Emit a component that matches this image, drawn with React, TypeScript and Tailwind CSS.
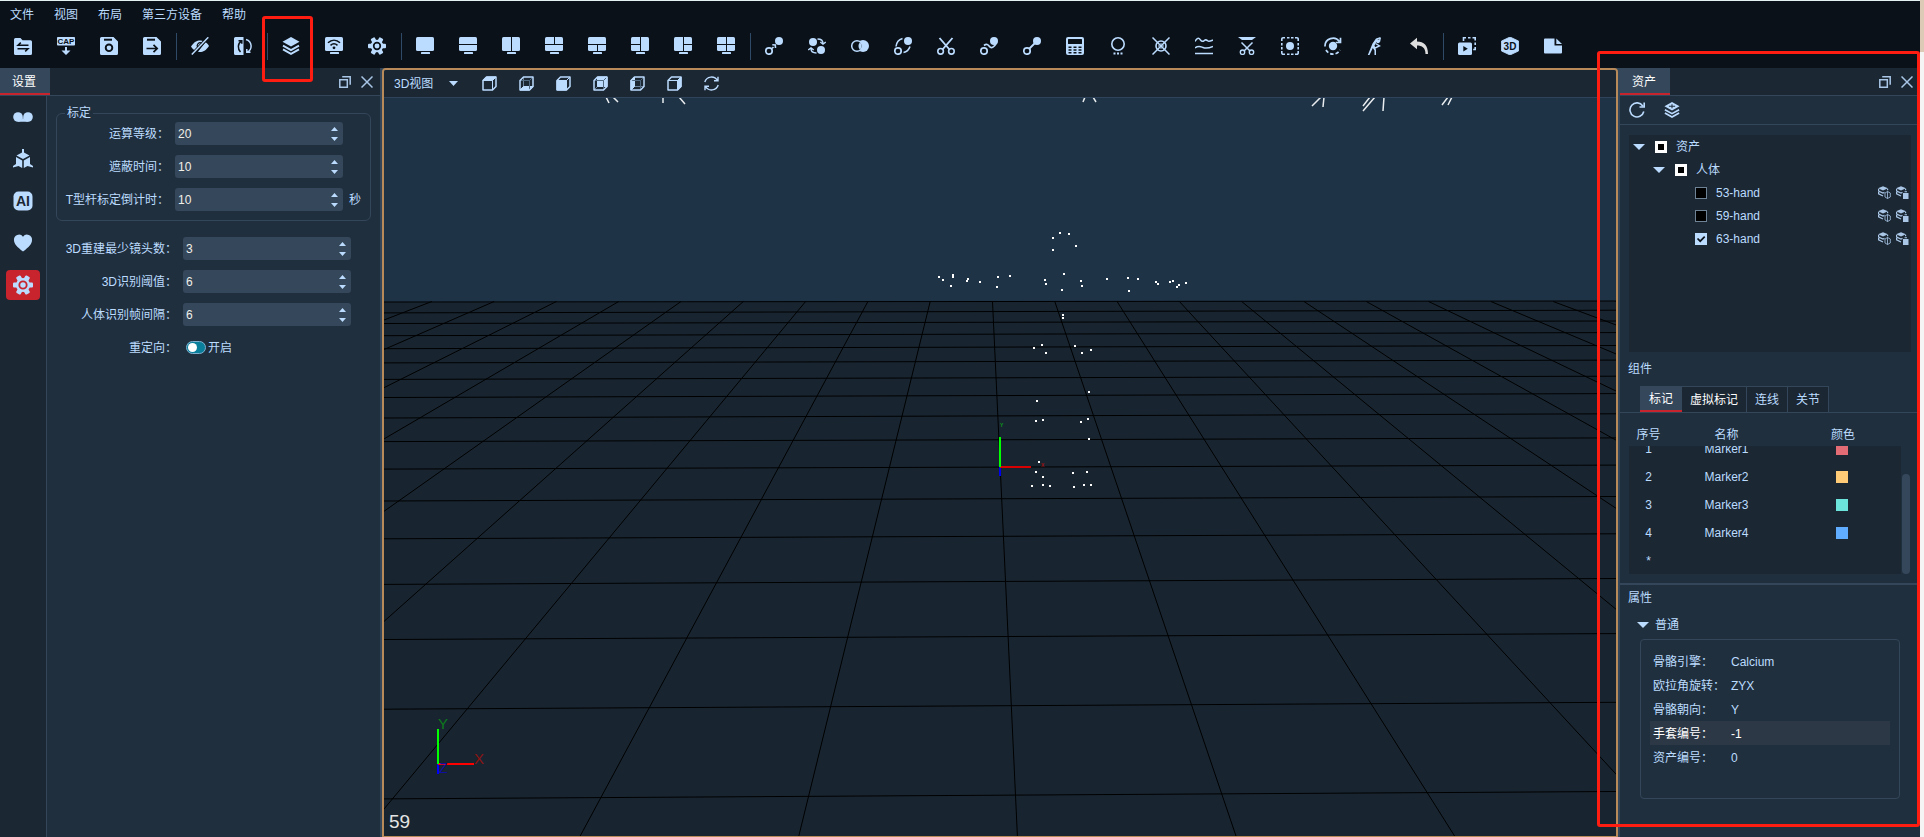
import React, { useState } from "react";

const DARK = "#0a1118";

const menus = ["文件", "视图", "布局", "第三方设备", "帮助"];

/* ---------- toolbar icons, 18 x 18 ---------- */

function Icon({ children, size = 18, box = 18 }: { children: React.ReactNode; size?: number; box?: number }) {
  return (
    <svg width={size} height={size} viewBox={`0 0 ${box} ${box}`} fill="currentColor" className="shrink-0" aria-hidden="true">
      {children}
    </svg>
  );
}

function Screen({ lines = "" }: { lines?: string }) {
  return (
    <Icon>
      <rect x="0" y="0" width="18" height="14" rx="1.5" />
      <rect x="5" y="15" width="9" height="2" rx="0.5" />
      <path d={lines} stroke={DARK} strokeWidth="1" fill="none" />
    </Icon>
  );
}

function Gear({ size = 18, hole = DARK }: { size?: number; hole?: string }) {
  return (
    <Icon size={size}>
      <circle cx="9" cy="9" r="6.3" />
      {[0, 60, 120].map((a) => (
        <rect key={a} x="0" y="6.7" width="18" height="4.6" rx="1" transform={`rotate(${a} 9 9)`} />
      ))}
      <circle cx="9" cy="9" r="3.3" fill="currentColor" stroke={hole} strokeWidth="1.7" />
    </Icon>
  );
}

function Layers({ size = 18, plus = false }: { size?: number; plus?: boolean }) {
  return (
    <Icon size={size}>
      <path d="M9 0l8.5 4.8L9 9.6.5 4.8z" />
      <path d="M1 8.6l8 4.5 8-4.5M1 12.4l8 4.5 8-4.5" fill="none" stroke="currentColor" strokeWidth="1.9" />
      {plus && <path d="M9 2.5v4.6M5.5 4.800h7" stroke="#202f3d" strokeWidth="1.2" />}
    </Icon>
  );
}

const toolGroups: { label: string; icon: React.ReactNode; color?: string }[][] = [
  [
    {
      label: "打开工程",
      icon: (
        <Icon>
          <path d="M1.5 1h5l2 2.2h8A1.5 1.5 0 0118 4.7v11.8a1.5 1.5 0 01-1.5 1.5h-15A1.5 1.5 0 010 16.5v-14A1.5 1.5 0 011.5 1z" />
          <path d="M14.5 8.3H4L6.8 5.6M3.5 11.7H14l-2.8 2.7" fill="none" stroke={DARK} strokeWidth="1.5" />
        </Icon>
      ),
    },
    {
      label: "导入CAP",
      icon: (
        <Icon>
          <rect x="0" y="0" width="18" height="8.5" rx="0.8" />
          <text x="9" y="7.2" textAnchor="middle" fontSize="8" fontWeight="700" fontFamily="Liberation Sans" fill={DARK}>CAP</text>
          <path d="M8 10h2v3.5h3.5L9 18l-4.5-4.5H8z" />
        </Icon>
      ),
    },
    {
      label: "保存",
      icon: (
        <Icon>
          <path d="M1.5 0h12L18 4.5v12a1.5 1.5 0 01-1.5 1.5h-15A1.5 1.5 0 010 16.5v-15A1.5 1.5 0 011.5 0z" />
          <path d="M4 2.7h8" stroke={DARK} strokeWidth="2" />
          <circle cx="9" cy="10.8" r="3.3" fill="none" stroke={DARK} strokeWidth="1.9" />
        </Icon>
      ),
    },
    {
      label: "另存为",
      icon: (
        <Icon>
          <path d="M1.5 0h12L18 4.5v12a1.5 1.5 0 01-1.5 1.5h-15A1.5 1.5 0 010 16.5v-15A1.5 1.5 0 011.5 0z" />
          <path d="M4 2.7h8" stroke={DARK} strokeWidth="2" />
          <path d="M3.5 11.5h10.5M10.5 7.8l3.7 3.7-3.7 3.7" fill="none" stroke={DARK} strokeWidth="1.7" />
        </Icon>
      ),
    },
  ],
  [
    {
      label: "隐藏",
      icon: (
        <Icon>
          <path d="M0 9.5C3 5 6 3.5 9 3.5c1.5 0 2.5.2 3.5.7L5 14C3 13 1.2 11.5 0 9.5zM14.5 5.2c1.5.8 2.5 2 3.5 3.8-3 4.5-6 6-9 6-.7 0-1.400-.1-2-.3z" />
          <path d="M17 .5L1 17.5" stroke={DARK} strokeWidth="3.2" />
          <path d="M17.3.3L.8 17.5" stroke="currentColor" strokeWidth="1.5" />
          <path d="M10.5 6a3 3 0 00-4 4" fill="none" stroke={DARK} strokeWidth="1.3" />
        </Icon>
      ),
    },
    {
      label: "翻转",
      icon: (
        <Icon>
          <path d="M1.5 0H9.5v18h-8A1.5 1.5 0 010 16.5v-15A1.5 1.5 0 011.5 0z" />
          <path d="M7.5 4C3.5 6.5 3.5 12 6.5 15M4.5 3.8h3.3v3" fill="none" stroke={DARK} strokeWidth="1.5" />
          <path d="M12 2.5c6.5 2 6.5 10 1.5 12.5M16.5 15.2h-3.7V12" fill="none" stroke="currentColor" strokeWidth="1.5" />
        </Icon>
      ),
    },
  ],
  [
    { label: "资产", icon: <Layers /> },
    {
      label: "网络",
      icon: (
        <Icon>
          <rect x="0" y="0" width="18" height="14" rx="1.5" />
          <rect x="5" y="15" width="9" height="2" rx="0.5" />
          <path d="M3 5.8c3.6-3.4 8.4-3.4 12 0M5.5 8.4c2.2-2 4.8-2 7 0" fill="none" stroke={DARK} strokeWidth="1.5" />
          <circle cx="9" cy="10.8" r="1.4" fill={DARK} />
        </Icon>
      ),
    },
    { label: "设置", icon: <Gear /> },
  ],
  [
    { label: "单视图", icon: <Screen /> },
    { label: "上下", icon: <Screen lines="M0 7.5h18" /> },
    { label: "左右", icon: <Screen lines="M9.5 0v14" /> },
    { label: "上二下一", icon: <Screen lines="M0 7.5h18M9.5 0v7.5" /> },
    { label: "上一下二", icon: <Screen lines="M0 7.5h18M9.5 7.5v7" /> },
    { label: "左二右一", icon: <Screen lines="M9.5 0v14M0 7.5h9.5" /> },
    { label: "左一右二", icon: <Screen lines="M9.5 0v14M9.5 7.5H18" /> },
    { label: "四视图", icon: <Screen lines="M9.5 0v14M0 7.5h18" /> },
  ],
  [
    {
      label: "标记",
      icon: (
        <Icon>
          <circle cx="14" cy="4" r="4" />
          <circle cx="4" cy="14" r="3.2" fill="none" stroke="currentColor" strokeWidth="1.7" />
          <path d="M7 11.5l1.5-1.5M7.3 7.8l3 .2.2 3" fill="none" stroke="currentColor" strokeWidth="1.6" />
        </Icon>
      ),
    },
    {
      label: "交换",
      icon: (
        <Icon>
          <circle cx="5" cy="5" r="4" />
          <circle cx="13" cy="13" r="4" />
          <path d="M9.5 2c3.5 0 5.5 1.5 5.5 4.5M12.3 5l2.7 2.2L17.7 5M8.5 16c-3.5 0-5.5-1.5-5.5-4.5M.3 13L3 10.8 5.7 13" fill="none" stroke="currentColor" strokeWidth="1.4" />
        </Icon>
      ),
    },
    {
      label: "合并",
      icon: (
        <Icon>
          <circle cx="12" cy="9" r="6" />
          <circle cx="6" cy="9" r="5.3" fill={DARK} stroke="currentColor" strokeWidth="1.5" />
          <path d="M9 5.2a5.500 5.500 0 000 7.600 5.500 5.500 0 000-7.600z" />
        </Icon>
      ),
    },
    {
      label: "断开",
      icon: (
        <Icon>
          <circle cx="14" cy="4" r="4" />
          <circle cx="4" cy="14" r="3.2" fill="none" stroke="currentColor" strokeWidth="1.7" />
          <path d="M2 9.5c.5-4 3-7 6.5-8M9.5 15.5c3-.5 5.5-3 6.5-6" fill="none" stroke="currentColor" strokeWidth="1.6" />
        </Icon>
      ),
    },
    {
      label: "剪切",
      icon: (
        <Icon>
          <circle cx="3.6" cy="14.3" r="2.8" fill="none" stroke="currentColor" strokeWidth="1.6" />
          <circle cx="14.4" cy="14.3" r="2.8" fill="none" stroke="currentColor" strokeWidth="1.6" />
          <path d="M2.5 1l10 11.5M15.5 1L5.5 12.5" stroke="currentColor" strokeWidth="1.9" />
        </Icon>
      ),
    },
    {
      label: "曲线",
      icon: (
        <Icon>
          <circle cx="14" cy="4" r="4" />
          <circle cx="4" cy="14" r="3.2" fill="none" stroke="currentColor" strokeWidth="1.7" />
          <path d="M4 8.5c2.5-2 4-1 5.5 1s5 1 6.5-3" fill="none" stroke="currentColor" strokeWidth="1.7" />
        </Icon>
      ),
    },
    {
      label: "连线",
      icon: (
        <Icon>
          <circle cx="14" cy="4" r="4" />
          <circle cx="4" cy="14" r="3.2" fill="none" stroke="currentColor" strokeWidth="1.7" />
          <path d="M6.5 11.5l5-5" stroke="currentColor" strokeWidth="1.8" />
        </Icon>
      ),
    },
    {
      label: "计算",
      icon: (
        <Icon>
          <rect x="0" y="0" width="18" height="18" rx="2" />
          <rect x="2" y="2" width="14" height="5" rx="0.5" fill={DARK} />
          <path d="M2.5 10.3h3M7.5 10.3h3M12.5 10.3h3M2.5 13h3M7.5 13h3M12.5 13h3M2.5 15.7h3M7.5 15.7h3M12.5 15.7h3" stroke={DARK} strokeWidth="1.4" />
        </Icon>
      ),
    },
    {
      label: "补点",
      icon: (
        <Icon>
          <circle cx="9" cy="7" r="6.2" fill="none" stroke="currentColor" strokeWidth="1.6" />
          <rect x="4.5" y="15.5" width="2" height="2" />
          <rect x="8" y="15.5" width="2" height="2" />
          <rect x="11.5" y="15.5" width="2" height="2" />
        </Icon>
      ),
    },
    {
      label: "删除点",
      icon: (
        <Icon>
          <circle cx="9" cy="9" r="5" fill="none" stroke="currentColor" strokeWidth="1.6" />
          <path d="M.5.5l17 17M17.5.5l-17 17" stroke="currentColor" strokeWidth="1.5" />
          <path d="M9 6.500L11.500 9 9 11.500 6.500 9z" fill="none" stroke="currentColor" strokeWidth="1" />
        </Icon>
      ),
    },
    {
      label: "平滑",
      icon: (
        <Icon>
          <path d="M0 4.5C2.5 0 4 1 5.5 3s2.5 1.500 4 .3 2.5 0 3.5.7 3-.2 5-1M0 11c3.500-3 5.500-1.500 8-.5s5 1 10-1M0 16.500h18" fill="none" stroke="currentColor" strokeWidth="1.5" />
        </Icon>
      ),
    },
    {
      label: "裁剪",
      icon: (
        <Icon>
          <path d="M0 0h18l-4 3H4z" />
          <path d="M3.5 5.5l8.5 8.5M14.5 5.5L6 14" stroke="currentColor" strokeWidth="1.5" />
          <circle cx="4.5" cy="15.2" r="2.2" fill="none" stroke="currentColor" strokeWidth="1.4" />
          <circle cx="13.5" cy="15.2" r="2.2" fill="none" stroke="currentColor" strokeWidth="1.4" />
        </Icon>
      ),
    },
    {
      label: "框选",
      icon: (
        <Icon>
          <path d="M.8 4V2A1.2 1.2 0 012 .8h2M14 .8h2A1.2 1.2 0 0117.2 2v2M17.2 14v2a1.2 1.2 0 01-1.2 1.2h-2M4 17.2H2A1.2 1.2 0 01.8 16v-2M6 .8h2.5M10 .8h2.5M6 17.2h2.5M10 17.2h2.5M.8 6v2.5M.8 10v2.5M17.2 6v2.5M17.2 10v2.5" fill="none" stroke="currentColor" strokeWidth="1.6" />
          <circle cx="9" cy="9" r="4" />
        </Icon>
      ),
    },
    {
      label: "旋转选择",
      icon: (
        <Icon>
          <circle cx="9" cy="9" r="4.2" />
          <path d="M1 9.5A8 8 0 0115.5 4.5M16.5.8v4.7h-4.8" fill="none" stroke="currentColor" strokeWidth="1.7" />
          <path d="M2 13a8 8 0 0014 0" fill="none" stroke="currentColor" strokeWidth="1.7" strokeDasharray="3.5 2" />
        </Icon>
      ),
    },
    {
      label: "人体",
      icon: (
        <Icon>
          <path d="M9 1.500L13.500 0v1.500L10.500 2.800 7.500 8.500 9 13v5H7.500v-4.500L5.800 11 2.500 18H.8L5.500 6.500z" />
          <circle cx="11" cy="4.300" r="1.900" />
          <path d="M13.200.8l-.7 3.700M8.500 6.500l4 2.500-4.500 2" fill="none" stroke="currentColor" strokeWidth="1.400" />
        </Icon>
      ),
    },
    {
      label: "撤销",
      color: "text-[#dedede]",
      icon: (
        <Icon>
          <path d="M0 6.5L7 .8v3.7c7 0 11 4 11 12.5h-2.5C15.5 11 12 8.6 7 8.6v3.7z" />
        </Icon>
      ),
    },
  ],
  [
    {
      label: "播放",
      icon: (
        <Icon>
          <rect x="0" y="5.5" width="14" height="12.5" rx="1.5" />
          <path d="M5.3 9v5.5l4.5-2.7z" fill={DARK} />
          <path d="M5.5 4V.8h2.5M10 .8h2.5M14.5.8h2.7v2.7M17.2 5.5V8M17.2 10v2.5h-2" fill="none" stroke="currentColor" strokeWidth="1.6" />
        </Icon>
      ),
    },
    {
      label: "三维",
      icon: (
        <Icon>
          <path d="M9 0l8.5 4v10L9 18 .5 14V4z" stroke="currentColor" strokeWidth="0.8" strokeLinejoin="round" />
          <text x="9" y="12.8" textAnchor="middle" fontSize="10" fontWeight="700" fontFamily="Liberation Sans" fill={DARK}>3D</text>
        </Icon>
      ),
    },
    {
      label: "文件",
      icon: (
        <Icon>
          <path d="M1 1.5h9.5v7H18v7a1 1 0 01-1 1H1a1 1 0 01-1-1v-13a1 1 0 011-1z" />
          <path d="M12.3 1.5L18 7h-5.7z" />
        </Icon>
      ),
    },
  ],
];

/* ---------- small icons ---------- */

function Triangle({ up = false, w = 12, h = 6 }: { up?: boolean; w?: number; h?: number }) {
  return (
    <svg width={w} height={h} viewBox="0 0 12 6" preserveAspectRatio="none" fill="currentColor" aria-hidden="true">
      <path d={up ? "M0 6h12L6 0z" : "M0 0h12L6 6z"} />
    </svg>
  );
}

function WindowButtons() {
  return (
    <div className="ml-auto flex items-center gap-[10px] pr-[7px] text-[#a9c6e6]">
      <button aria-label="浮动">
        <svg width="12" height="12" viewBox="0 0 12 12" fill="none" stroke="currentColor" strokeWidth="1.5" className="block">
          <path d="M.8 3.7h7.5v7.5H.8zM3.2.8h8v8" />
        </svg>
      </button>
      <button aria-label="关闭">
        <svg width="12" height="12" viewBox="0 0 12 12" fill="none" stroke="currentColor" strokeWidth="1.5" className="block">
          <path d="M.5.5l11 11M11.5.5l-11 11" />
        </svg>
      </button>
    </div>
  );
}

const cubeFaces = [
  { label: "顶视图", face: "M1 4.5L4.5 1H14l-3.5 3.5z" },
  { label: "底视图", face: "M1 14l3.5-3.5H14L10.5 14z", inner: true },
  { label: "前视图", face: "M1 4.5h9.5V14H1z" },
  { label: "后视图", face: "M4.5 1H14v9.5H4.5z", inner: true },
  { label: "左视图", face: "M1 4.5L4.5 1v9.5L1 14z", inner: true },
  { label: "右视图", face: "M10.5 4.5L14 1v9.5L10.5 14z" },
];

function Cube({ face, inner }: { face: string; inner?: boolean }) {
  return (
    <svg width="15" height="15" viewBox="0 0 15 15" fill="none" stroke="currentColor" className="block" aria-hidden="true">
      {inner && <path d="M4.5 1v9.5H14M1 14l3.5-3.5" strokeOpacity="0.5" />}
      <path d={face} fill="currentColor" />
      {inner ? (
        <path d="M1 4.5h9.5V14M10.5 4.5L14 1" stroke="#4f6880" />
      ) : (
        <path d="M1 4.5h9.5V14M10.5 4.5L14 1" strokeWidth="1" />
      )}
      <path d="M1 4.5L4.5 1H14v9.5L10.5 14H1z" strokeWidth="1.5" strokeLinejoin="round" />
    </svg>
  );
}

function AssetAction({ filled }: { filled?: boolean }) {
  return (
    <svg width="13" height="13" viewBox="0 0 13 13" fill="none" stroke="currentColor" className="block" aria-hidden="true">
      <path d="M5 .3L10 2.3 5 4.5 0 2.3z" fill="currentColor" stroke="none" />
      <path d="M.6 3v2L5 7l1.5-.6M.6 6v1.8L5 10M9.6 2.8v1.4" strokeWidth="1.2" />
      {filled ? (
        <path d="M7 7h5.5v6H7zM8.5 5.2h2.5v1H8.5z" fill="currentColor" stroke="none" />
      ) : (
        <path d="M9.5 5.5L7 7v4l2.5 1.5L12.3 11V7zM9.5 5.5v7" strokeOpacity="0.8" />
      )}
    </svg>
  );
}

/* ---------- left panel ---------- */

const sideItems = [
  {
    label: "标记点",
    icon: (
      <Icon size={20} box={20}>
        <circle cx="5" cy="10" r="4.8" />
        <circle cx="15" cy="10" r="4.8" />
        <path d="M4 14.8L9.300 12v-1.500h1.400V12l5.300 2.800z" />
      </Icon>
    ),
  },
  {
    label: "刚体",
    icon: (
      <Icon size={20} box={20}>
        <path d="M9 0h2v3.5l5.5 3L10 10 3.5 6.5 9 3.5zM3 8l6.2 3.5V19L5.5 17 0 18.5v-1.5L3 15zM17 8l-6.2 3.5V19l3.7-2 5.5 1.5v-1.5L17 15z" />
      </Icon>
    ),
  },
  {
    label: "智能",
    icon: (
      <Icon size={20} box={20}>
        <rect x="0.5" y="0.5" width="19" height="19" rx="5" />
        <text x="10" y="15" textAnchor="middle" fontSize="14" fontWeight="700" fontFamily="Liberation Sans" fill="#1b2733">AI</text>
      </Icon>
    ),
  },
  {
    label: "健康",
    icon: (
      <Icon size={20} box={20}>
        <path d="M10 18.5C4 14 1 11 1 7a5 5 0 019-3.3A5 5 0 0119 7c0 4-3 7-9 11.5z" />
      </Icon>
    ),
  },
  { label: "设置", icon: <Gear size={20} hole="#c7242e" />, active: true },
];

function SpinField({ id, label, initial, unit }: { id: string; label: string; initial: number; unit?: string }) {
  const [value, setValue] = useState(initial);
  return (
    <div className="flex h-[23px] items-center gap-[6px]">
      <label htmlFor={id} className="w-28 shrink-0 text-right whitespace-nowrap">{label}</label>
      <div className="flex h-full w-[168px] rounded-[3px] bg-[#35475b]">
        <input
          id={id}
          type="number"
          value={value}
          onChange={(e) => setValue(Number(e.target.value))}
          className="min-w-0 flex-1 bg-transparent px-[3px] text-[#f0efe8] outline-none [appearance:textfield] [&::-webkit-inner-spin-button]:appearance-none"
        />
        <div className="flex w-[18px] flex-col items-center justify-center gap-[6px]">
          <button aria-label={`${label}增加`} onClick={() => setValue(value + 1)}><span className="block"><Triangle up w={7} h={4} /></span></button>
          <button aria-label={`${label}减少`} onClick={() => setValue(value - 1)}><span className="block"><Triangle w={7} h={4} /></span></button>
        </div>
      </div>
      {unit && <span>{unit}</span>}
    </div>
  );
}

function PanelTab({ title }: { title: string }) {
  return (
    <div className="flex h-7 shrink-0 border-b border-[#33465a] bg-[#1b2733]">
      <button className="h-[27px] w-[50px] border-b-2 border-[#c7242e] bg-[#35475b] pt-[2px] pr-[2px] text-white">{title}</button>
      <WindowButtons />
    </div>
  );
}

function SettingsPanel() {
  const [redirect, setRedirect] = useState(false);
  return (
    <aside className="flex w-[380px] shrink-0 flex-col bg-[#202f3d]">
      <PanelTab title="设置" />
      <div className="flex flex-1">
        <nav className="flex w-[47px] shrink-0 flex-col items-center gap-3 border-r border-[#33465a] bg-[#1b2733] pt-[6px]">
          {sideItems.map((item) => (
            <button
              key={item.label}
              aria-label={item.label}
              className={`flex h-[30px] w-[34px] items-center justify-center rounded ${item.active ? "bg-[#c7242e]" : ""}`}
            >
              {item.icon}
            </button>
          ))}
        </nav>
        <div className="flex-1 px-[9px] pt-[9px]">
          <fieldset className="flex flex-col gap-[10px] rounded-md border border-[#33465a] pt-[1px] pb-[9px]">
            <legend className="ml-2 px-[2px] leading-4">标定</legend>
            <SpinField id="level" label="运算等级：" initial={20} />
            <SpinField id="mask" label="遮蔽时间：" initial={10} />
            <SpinField id="countdown" label="T型杆标定倒计时：" initial={10} unit="秒" />
          </fieldset>
          <div className="mt-4 flex flex-col gap-[10px] pl-[9px]">
            <SpinField id="cameras" label="3D重建最少镜头数：" initial={3} />
            <SpinField id="threshold" label="3D识别阈值：" initial={6} />
            <SpinField id="interval" label="人体识别帧间隔：" initial={6} />
            <div className="flex h-[23px] items-center">
              <label htmlFor="redirect" className="w-28 text-right">重定向：</label>
              <span className="relative ml-[9px] flex h-[13px] w-5 items-center">
                <input
                  id="redirect"
                  type="checkbox"
                  checked={redirect}
                  onChange={() => setRedirect(!redirect)}
                  className="h-[13px] w-5 appearance-none rounded-full border border-[#7fb0d0] bg-[#0a7f9b]"
                />
                <span className={`pointer-events-none absolute h-[9px] w-[9px] rounded-full bg-white ${redirect ? "right-[2px]" : "left-[2px]"}`} />
              </span>
              <span className="ml-[2px]">开启</span>
            </div>
          </div>
        </div>
      </div>
    </aside>
  );
}

/* ---------- 3D view ---------- */

// each row runs from the left edge height to the right edge height
const gridRows = [
  [302, 301], [312.9, 310.2], [323.5, 321], [335.7, 332.6], [348.7, 345.5], [362.9, 360.1],
  [379.4, 376.2], [397.5, 393.6], [418, 413.8], [441.6, 437.9], [469.1, 465.1], [501, 496.5],
  [538.8, 533.8], [584.4, 578.5], [639.5, 633.6], [709.2, 702.3], [798.9, 791.5],
];
const gridColumns = Array.from({ length: 20 }, (_, i) => i - 9);

const markers = [
  [1060, 233], [1053, 238], [1069, 234], [1076, 246], [1053, 250], [1064, 274], [1045, 280], [1046, 284],
  [1062, 290], [1081, 281], [1082, 286], [939, 277], [943, 280], [951, 286], [953, 275], [953, 277],
  [968, 279], [967, 281], [980, 282], [998, 277], [997, 287], [1010, 276], [1107, 279], [1128, 278],
  [1138, 279], [1129, 291], [1156, 282], [1158, 284], [1170, 282], [1173, 281], [1186, 283], [1179, 285],
  [1177, 287], [1063, 315], [1063, 318], [1034, 348], [1042, 345], [1046, 353], [1075, 346], [1082, 353],
  [1091, 350], [1089, 392], [1037, 401], [1036, 421], [1043, 420], [1081, 422], [1088, 419], [1089, 439],
  [1039, 462], [1036, 472], [1043, 477], [1073, 473], [1087, 472], [1032, 486], [1043, 485], [1050, 486],
  [1074, 487], [1084, 485], [1091, 485],
];

const cameraLines =
  "M606 97l3 6M613 97l5 5M663 97v6M679 97l6 7M1085 97l-2 5M1093 97l3 5M1321 97l-9 9M1324 97l-1 10M1370 97l-7 9M1375 97l-12 14M1384 97l-1 14M1448 97l-6 8M1452 97l-4 8";

function Scene() {
  return (
    <svg viewBox="384 98 1232 738" preserveAspectRatio="xMidYMid slice" className="block h-full w-full bg-[#1f3347]">
      <path d="M384 302L1616 301V836H384z" fill="#182530" />
      <g stroke="#000" strokeWidth="1">
        {gridRows.map(([a, b], i) => (
          <line key={i} x1="384" y1={a} x2="1616" y2={b} />
        ))}
        {gridColumns.map((k) => (
          <line key={k} x1={992.5 + 62.3 * k} y1="301.5" x2={1017.4 + 218.6 * k} y2="836" />
        ))}
      </g>
      <path d={cameraLines} fill="none" stroke="#e8ecee" strokeWidth="1.5" />
      {markers.map(([x, y], i) => (
        <rect key={i} x={x - 1} y={y - 1} width="2" height="2" fill="#fff" />
      ))}
      <g fontFamily="Liberation Sans">
        <path d="M1000 467v9" stroke="#0000f0" strokeWidth="2" />
        <path d="M1000 467h31" stroke="#d80000" strokeWidth="2" />
        <path d="M1000 437v30" stroke="#00ff00" strokeWidth="2" />
        <text x="1000" y="427" fontSize="5" fontWeight="700" fill="#0a9a1a">Y</text>
        <text x="1041" y="467" fontSize="5" fontWeight="700" fill="#a01010">X</text>
        <path d="M438 764v10" stroke="#0000ff" strokeWidth="2" />
        <path d="M438 764h36" stroke="#ff0000" strokeWidth="2" />
        <path d="M438 729v35" stroke="#00ff00" strokeWidth="2" />
        <text x="438" y="729" fontSize="15" fill="#0d7a1c">Y</text>
        <text x="474" y="764" fontSize="15" fill="#8b1414">X</text>
        <text x="439" y="773" fontSize="14" fill="#1010a0">Z</text>
        <text x="389" y="828" fontSize="19" fill="#e4e4e4">59</text>
      </g>
    </svg>
  );
}

function View3D() {
  return (
    <main className="flex min-w-0 flex-1 flex-col overflow-hidden rounded-t border-2 border-b border-[#b88a5a]">
      <div className="flex h-7 shrink-0 items-center border-b border-[#2f445a] bg-[#1b2733] pl-[10px]">
        <button className="flex items-center gap-4">
          3D视图
          <Triangle w={9} h={5} />
        </button>
        <div className="ml-6 flex gap-[22px]">
          {cubeFaces.map((c) => (
            <button key={c.label} aria-label={c.label}>
              <Cube face={c.face} inner={c.inner} />
            </button>
          ))}
          <button aria-label="刷新">
            <svg width="15" height="15" viewBox="0 0 15 15" fill="none" stroke="currentColor" strokeWidth="1.4" className="block">
              <path d="M.8 6A7 7 0 0113.5 4.5M14 .8v4h-4M14.2 9A7 7 0 011.5 10.5M1 14.2v-4h4" />
            </svg>
          </button>
        </div>
      </div>
      <div className="min-h-0 flex-1">
        <Scene />
      </div>
    </main>
  );
}

/* ---------- right panel ---------- */

function TreeCheck({ id, state }: { id: string; state: "on" | "off" | "mixed" }) {
  const [checked, setChecked] = useState(state === "on");
  const look =
    state === "mixed"
      ? "border-[3px] border-white bg-black"
      : checked
        ? "bg-[#bcdcff]"
        : "border border-[#6f8396] bg-black";
  return (
    <span className="relative block h-3 w-3">
      <input id={id} type="checkbox" checked={checked} onChange={() => setChecked(!checked)} className={`block h-3 w-3 appearance-none ${look}`} />
      {checked && (
        <svg width="12" height="12" viewBox="0 0 12 12" fill="none" stroke="#0a1118" strokeWidth="1.7" className="pointer-events-none absolute inset-0">
          <path d="M2.5 5.5l2.7 2.7 4.5-4.5" />
        </svg>
      )}
    </span>
  );
}

const hands = [
  { name: "53-hand", state: "off" as const },
  { name: "59-hand", state: "off" as const },
  { name: "63-hand", state: "on" as const },
];

const markerRows = [
  { id: "1", name: "Marker1", color: "bg-[#e46c74]" },
  { id: "2", name: "Marker2", color: "bg-[#ffcb77]" },
  { id: "3", name: "Marker3", color: "bg-[#6ce4dc]" },
  { id: "4", name: "Marker4", color: "bg-[#60adff]" },
  { id: "*", name: "", color: "" },
];

const properties = [
  { label: "骨骼引擎：", value: "Calcium" },
  { label: "欧拉角旋转：", value: "ZYX" },
  { label: "骨骼朝向：", value: "Y" },
  { label: "手套编号：", value: "-1", active: true },
  { label: "资产编号：", value: "0" },
];

function AssetPanel() {
  return (
    <aside className="flex w-[300px] shrink-0 flex-col bg-[#202f3d]">
      <PanelTab title="资产" />
      <div className="flex h-[29px] shrink-0 items-center gap-[19px] border-b border-[#33465a] pl-[9px]">
        <button aria-label="刷新">
          <svg width="16" height="16" viewBox="0 0 16 16" fill="none" stroke="currentColor" strokeWidth="1.6" className="block">
            <path d="M14.8 9.5A7 7 0 1113.8 4M15.2.5V5h-4.7" />
          </svg>
        </button>
        <button aria-label="新建资产"><Layers size={16} plus /></button>
      </div>

      <div className="mt-[10px] mr-[9px] ml-[9px] h-[217px] shrink-0 bg-[#1b2733]">
        <div className="flex h-[23px] items-center pl-1">
          <Triangle />
          <span className="ml-[10px]"><TreeCheck id="all" state="mixed" /></span>
          <label htmlFor="all" className="ml-[9px]">资产</label>
        </div>
        <div className="flex h-[23px] items-center pl-6">
          <Triangle />
          <span className="ml-[10px]"><TreeCheck id="body" state="mixed" /></span>
          <label htmlFor="body" className="ml-[9px]">人体</label>
        </div>
        {hands.map((h) => (
          <div key={h.name} className="flex h-[23px] items-center pr-[2px] pl-[66px]">
            <TreeCheck id={h.name} state={h.state} />
            <label htmlFor={h.name} className="ml-[9px]">{h.name}</label>
            <div className="ml-auto flex gap-[5px] text-[#a9c6e6]">
              <button aria-label={`${h.name} 导出`}><AssetAction /></button>
              <button aria-label={`${h.name} 删除`}><AssetAction filled /></button>
            </div>
          </div>
        ))}
      </div>

      <h2 className="mt-[9px] pl-2 leading-4">组件</h2>
      <div className="mt-[9px] flex h-[27px] shrink-0 border-b border-[#33465a] pl-5">
        <button className="h-[26px] border-b-2 border-[#c7242e] bg-[#35475b] px-[9px] pt-[2px] text-white">标记</button>
        <button className="h-[26px] border-t border-r border-[#33465a] bg-[#1b2733] px-2 pt-[1px] text-white">虚拟标记</button>
        <button className="h-[26px] border-t border-r border-[#33465a] bg-[#1b2733] px-2 pt-[1px]">连线</button>
        <button className="h-[26px] border-t border-r border-[#33465a] bg-[#1b2733] px-2 pt-[1px]">关节</button>
      </div>

      <div className="mt-[9px] flex pl-[9px]">
        <table className="block w-[272px] text-center">
          <thead className="block">
            <tr className="grid h-6 grid-cols-[39px_117px_116px] items-center pt-[1px]">
              <th className="font-normal">序号</th>
              <th className="font-normal">名称</th>
              <th className="font-normal">颜色</th>
            </tr>
          </thead>
          <tbody className="block h-32 overflow-hidden bg-[#1b2733]">
            {markerRows.map((r) => (
              <tr key={r.id} className="grid h-7 grid-cols-[39px_117px_116px] items-center pt-[1px] first:-mt-3">
                <td>{r.id}</td>
                <td>{r.name}</td>
                <td className="flex justify-center pr-[2px]"><span className={`block h-3 w-3 ${r.color}`} /></td>
              </tr>
            ))}
          </tbody>
        </table>
        <div className="ml-[1px] flex flex-col justify-end">
          <div className="h-[100px] w-2 rounded bg-[#35475b]" />
        </div>
      </div>

      <div className="mt-[9px] h-[2px] shrink-0 bg-[#33465a]" />
      <h2 className="mt-[5px] pl-2 leading-4">属性</h2>
      <button className="mt-[11px] flex h-4 items-center gap-[6px] pl-[17px]">
        <Triangle />
        普通
      </button>
      <div className="mt-[6px] mr-5 ml-5 h-40 shrink-0 rounded-[4px] border border-[#33465a] p-[9px]">
        {properties.map((p) => (
          <div key={p.label} className={`flex h-6 items-center pt-[2px] pl-[3px] ${p.active ? "bg-[#2d3847] text-white" : ""}`}>
            <span className="w-[78px]">{p.label}</span>
            <span>{p.value}</span>
          </div>
        ))}
      </div>
    </aside>
  );
}

export default function App() {
  return (
    <div className="relative flex h-screen overflow-hidden bg-[#33465a] font-['Liberation_Sans','Noto_Sans_CJK_SC',sans-serif] text-xs text-[#bcdcff]">
      <div className="flex min-w-0 flex-1 flex-col">
        <header className="shrink-0 border-t border-[#e4f2f2] bg-[#0a1118] pb-1">
          <nav className="flex h-[27px] items-center">
            {menus.map((m) => (
              <button key={m} className="px-[10px]">{m}</button>
            ))}
          </nav>
          <div className="flex h-9 items-center gap-px pl-[2px]">
            {toolGroups.map((group, i) => (
              <React.Fragment key={i}>
                {i > 0 && <span className="mr-px ml-[2px] h-[27px] w-px bg-[#2f4a66]" />}
                {group.map((tool) => (
                  <button key={tool.label} aria-label={tool.label} className={`px-3 ${tool.color ?? ""}`}>
                    {tool.icon}
                  </button>
                ))}
              </React.Fragment>
            ))}
          </div>
        </header>
        <div className="flex min-h-0 flex-1">
          <SettingsPanel />
          <div className="w-[2px] shrink-0" />
          <View3D />
          <div className="w-[2px] shrink-0" />
          <AssetPanel />
        </div>
      </div>

      <div className="flex w-1 shrink-0 flex-col bg-[#f5f5f5]">
        <div className="h-[52px] bg-[#dcc9b6]" />
      </div>

      {/* highlight frames */}
      <div className="pointer-events-none absolute top-4 left-[262px] h-[66px] w-[51px] rounded-[3px] border-3 border-[#ff1d12]" />
      <div className="pointer-events-none absolute top-[51px] right-1 bottom-[10px] w-[323px] rounded-[3px] border-3 border-[#ff1d12]" />
    </div>
  );
}
